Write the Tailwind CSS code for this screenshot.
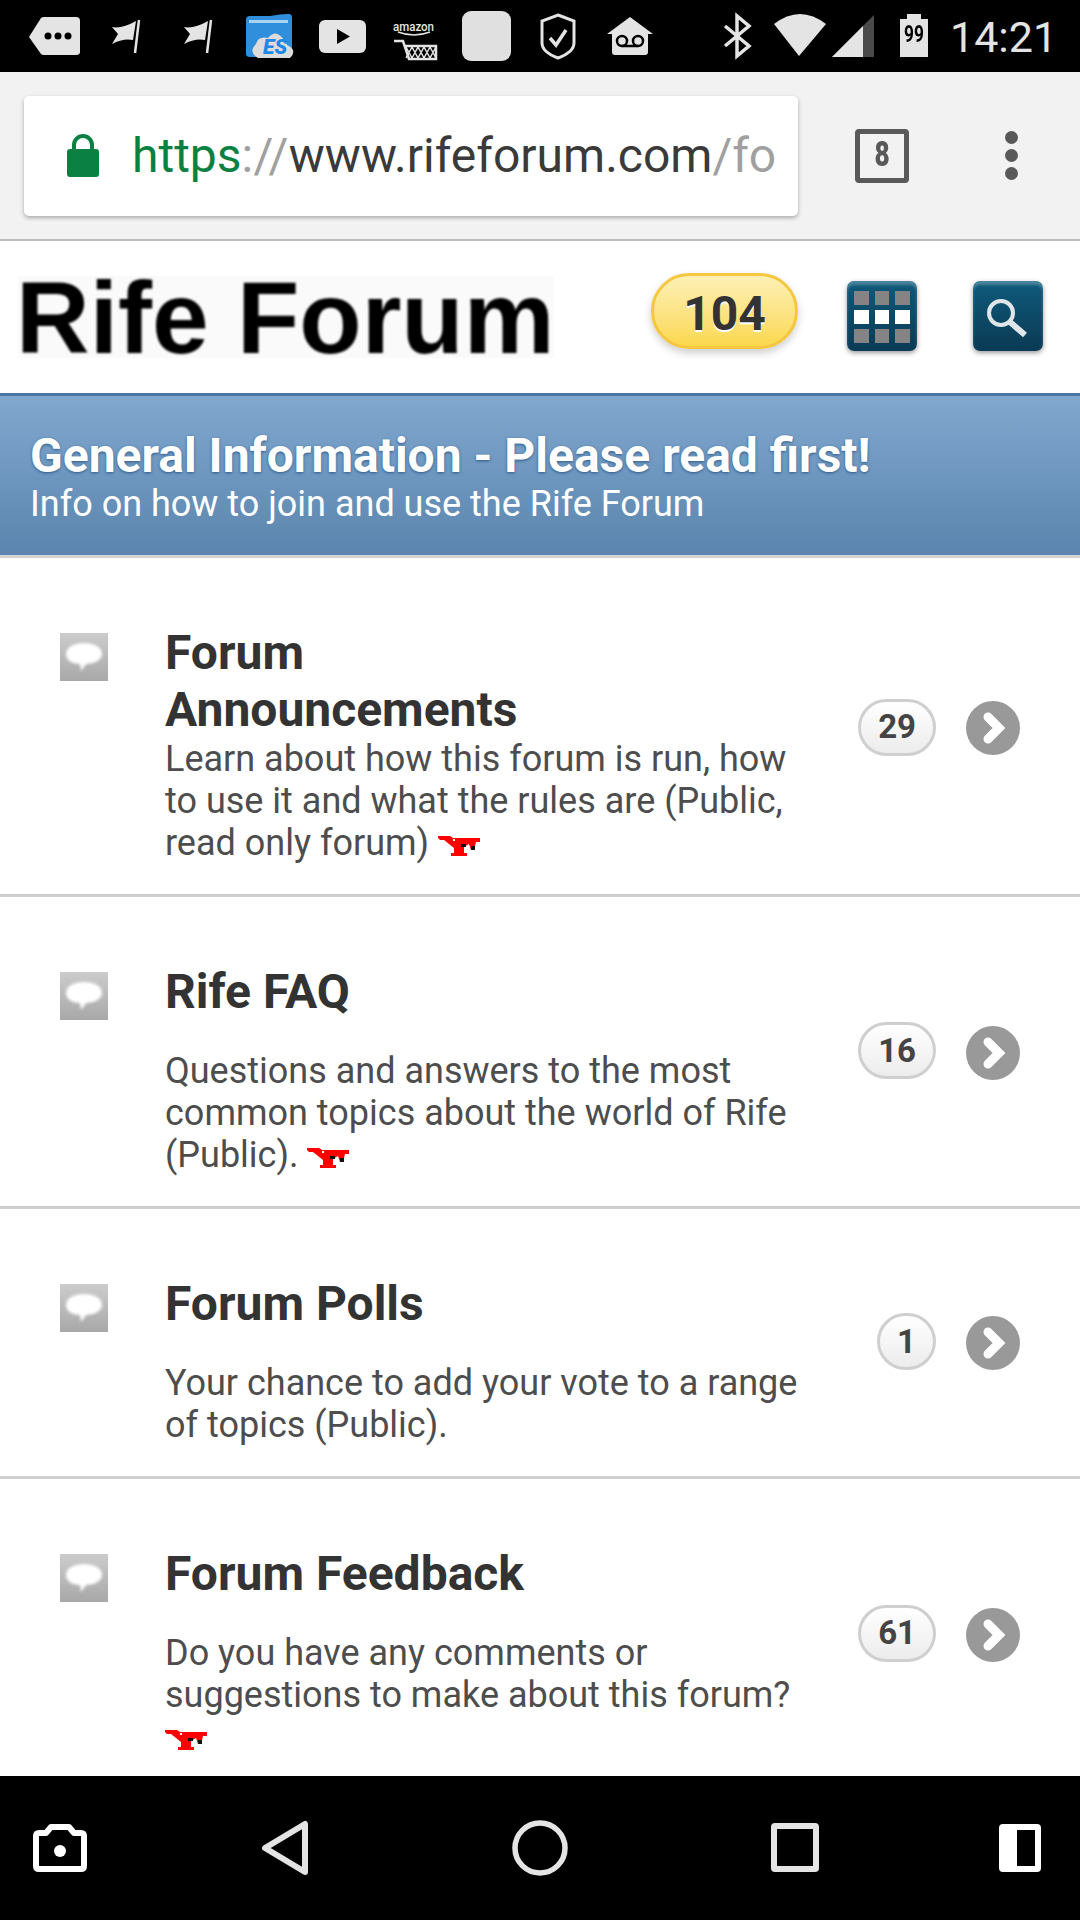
<!DOCTYPE html>
<html lang="en">
<head>
    <meta charset="UTF-8">
    <meta name="viewport" content="width=device-width, initial-scale=1.0">
    <title>Rife Forum</title>
    <script src="https://cdn.jsdelivr.net/npm/@tailwindcss/browser@4"></script>
</head>
<body class="font-['Roboto',sans-serif] bg-white">
<div class="w-[1080px] h-[1920px] flex flex-col overflow-hidden">

    <!-- status bar -->
    <div class="h-[72px] shrink-0 bg-black relative text-[#e4e4e4]">
        <svg class="absolute inset-0" width="1080" height="72" viewBox="0 0 1080 72">
            <!-- notification tag -->
            <path d="M29 37 L41 18 Q42 17 44 17 H76 Q80 17 80 21 V52 Q80 55 76 55 H44 Q42 55 41 54 Z" fill="#e4e4e4"/>
            <circle cx="48" cy="36" r="3.5" fill="#000"/><circle cx="58" cy="36" r="3.5" fill="#000"/><circle cx="68" cy="36" r="3.5" fill="#000"/>
            <!-- flags -->
            <path d="M112 27 Q122 29 136 21 L133 40 Q123 38 112 44 L118 34 Z" fill="#e4e4e4"/><path d="M139 20 L135 53" stroke="#e4e4e4" stroke-width="2.5"/>
            <path d="M184 27 Q194 29 208 21 L205 40 Q195 38 184 44 L190 34 Z" fill="#e4e4e4"/><path d="M211 20 L207 53" stroke="#e4e4e4" stroke-width="2.5"/>
            <!-- ES folder -->
            <path d="M246 20 Q246 16 250 16 H270 Q280 14 288 14 H289 Q292 14 292 18 V54 Q292 57 289 57 H250 Q246 57 246 54 Z" fill="#2f8fdc"/>
            <path d="M249 20 H288 V23 H249 Z" fill="#a9d3f2"/>
            <path d="M258 58 Q248 52 256 44 Q258 36 268 38 Q276 28 284 40 Q287 42 287 45 Q298 50 290 58 Z" fill="#dcdcdc"/>
            <text x="263" y="54" font-family="Roboto" font-size="21" font-weight="900" font-style="italic" fill="#1e88e5">ES</text>
            <!-- youtube -->
            <rect x="319" y="20" width="47" height="33" rx="6" fill="#e4e4e4"/><path d="M337 29 L350 36.500 L337 44 Z" fill="#000"/>
            <!-- amazon cart -->
            <text x="393" y="31" font-family="Roboto" font-size="13" font-weight="500" fill="#e4e4e4" textLength="41" lengthAdjust="spacingAndGlyphs">amazon</text>
            <path d="M398 32 Q414 38 430 32" fill="none" stroke="#e4e4e4" stroke-width="1.500"/>
            <path d="M394 41 H403 L409 59 H436 V46 H405" fill="none" stroke="#e4e4e4" stroke-width="2.500"/>
            <path d="M406 47 L412 58 M412 47 L418 58 M418 47 L424 58 M424 47 L430 58 M430 47 L436 58 M412 47 L406 58 M418 47 L412 58 M424 47 L418 58 M430 47 L424 58 M436 47 L430 58" stroke="#e4e4e4" stroke-width="1.500"/>
            <!-- blank app -->
            <rect x="462" y="11" width="49" height="50" rx="9" fill="#e0e0e0"/>
            <!-- shield -->
            <path d="M558 15 L574 21 V43 Q574 52 558 58 Q542 52 542 43 V21 Z" fill="none" stroke="#e4e4e4" stroke-width="3"/>
            <path d="M550 38 L556 45 L566 30" fill="none" stroke="#e4e4e4" stroke-width="3.500"/>
            <!-- voicemail house -->
            <path d="M630 17 L653 34 H648 V52 Q648 55 645 55 H615 Q612 55 612 52 V34 H607 Z" fill="#e4e4e4"/>
            <circle cx="622" cy="41" r="5" fill="none" stroke="#000" stroke-width="2.500"/><circle cx="638" cy="41" r="5" fill="none" stroke="#000" stroke-width="2.500"/><path d="M622 46 H638" stroke="#000" stroke-width="2.500"/>
            <!-- bluetooth -->
            <path d="M725 26 L749 46 L737 56 V16 L749 26 L725 46" fill="none" stroke="#e4e4e4" stroke-width="3.500"/>
            <!-- wifi -->
            <path d="M774 24 Q800 4 826 24 L799 56 Z" fill="#e4e4e4"/>
            <!-- signal -->
            <path d="M832 57 L874 15 V57 Z" fill="#4a4a4a"/><path d="M832 57 L863 26 V57 Z" fill="#e4e4e4"/>
            <!-- battery -->
            <path d="M900 19 H907 V14 H921 V19 H928 V57 H900 Z" fill="#e4e4e4"/>
        </svg>
        <span class="absolute left-[900px] w-[28px] top-[22px] text-center text-[23px] leading-[26px] font-bold text-black scale-x-75">99</span>
        <span class="absolute left-[950px] top-[15px] text-[43px] leading-[44px] font-normal">14:21</span>
    </div>

    <!-- browser toolbar -->
    <div class="h-[169px] shrink-0 bg-[#f2f2f2] border-b-2 border-[#bdbdbd] flex items-center pl-[24px]">
        <div class="w-[774px] h-[120px] bg-white rounded-[5px] shadow-[0_2px_4px_rgba(0,0,0,0.3)] flex items-center overflow-hidden">
            <svg class="ml-[43px] mr-[33px] shrink-0" width="32" height="44" viewBox="0 0 32 44">
                <path d="M7 18 V11 A9 9 0 0 1 25 11 V18" fill="none" stroke="#0b8043" stroke-width="4"/>
                <rect x="0" y="15" width="32" height="28" rx="3" fill="#0b8043"/>
            </svg>
            <div class="text-[48px] leading-none whitespace-nowrap text-[#3a3a3a]"><span class="text-[#0b8043]">https</span><span class="text-[#a0a0a0] tracking-[0.4px]">://</span>www.rifeforum.com<span class="text-[#a0a0a0]">/fo</span></div>
        </div>
        <div class="ml-[57px] w-[54px] h-[54px] border-[5px] border-[#595959] rounded-[4px] flex items-center justify-center text-[35px] font-black text-[#595959]"><span class="scale-x-75">8</span></div>
        <div class="ml-[96px] flex flex-col gap-[5px]">
            <div class="w-[13px] h-[13px] rounded-full bg-[#595959]"></div>
            <div class="w-[13px] h-[13px] rounded-full bg-[#595959]"></div>
            <div class="w-[13px] h-[13px] rounded-full bg-[#595959]"></div>
        </div>
    </div>

    <!-- forum header -->
    <div class="h-[152px] shrink-0 bg-white flex items-center pl-[18px]">
        <div class="w-[536px] h-[82px] bg-[#fafafa] flex items-center">
            <span class="-ml-[2px] mt-[2px] font-['Liberation_Sans',sans-serif] font-bold text-[102px] leading-[82px] text-black blur-[0.8px] whitespace-nowrap">Rife Forum</span>
        </div>
        <div class="ml-[97px] mb-[12px] pt-[6px] w-[147px] h-[76px] rounded-full border-[3px] border-[#f5c63f] bg-gradient-to-b from-[#fdf0b4] to-[#fbd84c] shadow-[0_4px_8px_rgba(0,0,0,0.2)] flex items-center justify-center text-[48px] font-bold text-[#333] [text-shadow:0_2px_0_#fff]">104</div>
        <div class="ml-[49px] mb-[2px] w-[70px] h-[70px] rounded-[7px] bg-gradient-to-b from-[#0f5a7b] to-[#0a3a54] shadow-[0_2px_5px_rgba(0,0,0,0.4),inset_0_4px_3px_rgba(255,255,255,0.25)] grid grid-cols-3 gap-x-[6px] gap-y-[5px] px-[7px] pt-[10px] pb-[8px]">
            <div class="bg-[#848484] blur-[0.5px]"></div><div class="bg-[#848484] blur-[0.5px]"></div><div class="bg-[#848484] blur-[0.5px]"></div>
            <div class="bg-white blur-[0.5px]"></div><div class="bg-white blur-[0.5px]"></div><div class="bg-white blur-[0.5px]"></div>
            <div class="bg-[#848484] blur-[0.5px]"></div><div class="bg-[#848484] blur-[0.5px]"></div><div class="bg-[#848484] blur-[0.5px]"></div>
        </div>
        <div class="ml-[56px] mb-[2px] w-[70px] h-[70px] rounded-[7px] bg-gradient-to-b from-[#0f5a7b] to-[#0a3a54] shadow-[0_2px_5px_rgba(0,0,0,0.4),inset_0_4px_3px_rgba(255,255,255,0.25)]">
            <svg class="blur-[0.5px]" width="70" height="70" viewBox="0 0 70 70">
                <circle cx="28" cy="32" r="12" fill="none" stroke="#dfe6ea" stroke-width="4"/>
                <path d="M37 41 L52 54" stroke="#dfe6ea" stroke-width="6"/>
            </svg>
        </div>
    </div>

    <!-- category banner -->
    <div class="h-[165px] shrink-0 border-t-[3px] border-b-[3px] border-t-[#4a76a4] border-b-[#d2d2d2] bg-gradient-to-b from-[#81a8cf] to-[#5b85ae] pl-[30px] pt-[33px] text-white">
        <div class="text-[48px] leading-[54px] font-bold [text-shadow:0_1px_3px_#2a5a8a]">General Information - Please read first!</div>
        <div class="text-[36px] leading-[42px]">Info on how to join and use the Rife Forum</div>
    </div>

    <!-- forum rows -->
    <div class="flex-1 overflow-hidden bg-white">
        <div class="h-[339px] flex items-center border-b-[3px] border-[#cfcfcf] pl-[60px]">
            <div class="self-start mt-[75px] w-[48px] h-[48px] shrink-0 bg-gradient-to-b from-[#cccccc] to-[#a8a8a8] flex items-center justify-center">
                <svg width="40" height="34" viewBox="0 0 40 34"><path d="M20 3 C32 3 38 8 38 14 C38 20 30 24 22 24 L17 31 L16 24 C8 24 2 20 2 14 C2 8 8 3 20 3 Z" fill="#fff" class="blur-[1.5px]"/></svg>
            </div>
            <div class="self-start mt-[66px] ml-[57px] w-[640px] shrink-0">
                <div class="text-[48px] leading-[57px] font-bold text-[#333] w-[400px]">Forum Announcements</div>
                <div class="text-[36px] leading-[42px] text-[#4d4d4d]">Learn about how this forum is run, how to use it and what the rules are (Public, read only forum) <svg class="inline-block align-[-2px]" width="42" height="22" viewBox="0 0 42 22"><path d="M0 1 H12 L15 3 H21 V3 H42 V7 H38 L36 15 H33 L31 9 L26 12 V18 H29 V21 H13 V18 H16 V13 L6 5 H2 L0 3 Z" fill="#f00"/><path d="M23 9 H28 V12 H23 Z M33 11 H37 V15 H33 Z" fill="#111"/><path d="M15 4 H17 V6 H15 Z M29 11 H31 V13 H29 Z" fill="#fff"/></svg></div>
            </div>
            <div class="ml-auto mt-[4px] flex items-center gap-[30px] pr-[60px]">
                <div class="mb-[2px] h-[57px] min-w-[56px] px-[17px] rounded-full border-[3px] border-[#cfcfcf] bg-gradient-to-b from-white to-[#ececec] flex items-center justify-center text-[33px] font-bold text-[#444]">29</div>
                <div class="w-[54px] h-[54px] rounded-full bg-[#999] flex items-center justify-center">
                    <svg class="blur-[0.5px]" width="30" height="34" viewBox="0 0 30 34"><path d="M10 6 L21 17 L10 28" fill="none" stroke="#fff" stroke-width="9" stroke-linecap="round"/></svg>
                </div>
            </div>
        </div>

        <div class="h-[312px] flex items-center border-b-[3px] border-[#cfcfcf] pl-[60px]">
            <div class="self-start mt-[75px] w-[48px] h-[48px] shrink-0 bg-gradient-to-b from-[#cccccc] to-[#a8a8a8] flex items-center justify-center">
                <svg width="40" height="34" viewBox="0 0 40 34"><path d="M20 3 C32 3 38 8 38 14 C38 20 30 24 22 24 L17 31 L16 24 C8 24 2 20 2 14 C2 8 8 3 20 3 Z" fill="#fff" class="blur-[1.5px]"/></svg>
            </div>
            <div class="self-start mt-[66px] ml-[57px] w-[640px] shrink-0">
                <div class="text-[48px] leading-[57px] font-bold text-[#333] mb-[30px]">Rife FAQ</div>
                <div class="text-[36px] leading-[42px] text-[#4d4d4d]">Questions and answers to the most common topics about the world of Rife (Public). <svg class="inline-block align-[-2px]" width="42" height="22" viewBox="0 0 42 22"><path d="M0 1 H12 L15 3 H21 V3 H42 V7 H38 L36 15 H33 L31 9 L26 12 V18 H29 V21 H13 V18 H16 V13 L6 5 H2 L0 3 Z" fill="#f00"/><path d="M23 9 H28 V12 H23 Z M33 11 H37 V15 H33 Z" fill="#111"/><path d="M15 4 H17 V6 H15 Z M29 11 H31 V13 H29 Z" fill="#fff"/></svg></div>
            </div>
            <div class="ml-auto mt-[2px] flex items-center gap-[30px] pr-[60px]">
                <div class="mb-[4px] h-[57px] min-w-[56px] px-[17px] rounded-full border-[3px] border-[#cfcfcf] bg-gradient-to-b from-white to-[#ececec] flex items-center justify-center text-[33px] font-bold text-[#444]">16</div>
                <div class="w-[54px] h-[54px] rounded-full bg-[#999] flex items-center justify-center">
                    <svg class="blur-[0.5px]" width="30" height="34" viewBox="0 0 30 34"><path d="M10 6 L21 17 L10 28" fill="none" stroke="#fff" stroke-width="9" stroke-linecap="round"/></svg>
                </div>
            </div>
        </div>

        <div class="h-[270px] flex items-center border-b-[3px] border-[#cfcfcf] pl-[60px]">
            <div class="self-start mt-[75px] w-[48px] h-[48px] shrink-0 bg-gradient-to-b from-[#cccccc] to-[#a8a8a8] flex items-center justify-center">
                <svg width="40" height="34" viewBox="0 0 40 34"><path d="M20 3 C32 3 38 8 38 14 C38 20 30 24 22 24 L17 31 L16 24 C8 24 2 20 2 14 C2 8 8 3 20 3 Z" fill="#fff" class="blur-[1.5px]"/></svg>
            </div>
            <div class="self-start mt-[66px] ml-[57px] w-[650px] shrink-0">
                <div class="text-[48px] leading-[57px] font-bold text-[#333] mb-[30px]">Forum Polls</div>
                <div class="text-[36px] leading-[42px] text-[#4d4d4d]">Your chance to add your vote to a range of topics (Public).</div>
            </div>
            <div class="ml-auto flex items-center gap-[30px] pr-[60px]">
                <div class="mb-[2px] h-[57px] min-w-[56px] px-[17px] rounded-full border-[3px] border-[#cfcfcf] bg-gradient-to-b from-white to-[#ececec] flex items-center justify-center text-[33px] font-bold text-[#444]">1</div>
                <div class="w-[54px] h-[54px] rounded-full bg-[#999] flex items-center justify-center">
                    <svg class="blur-[0.5px]" width="30" height="34" viewBox="0 0 30 34"><path d="M10 6 L21 17 L10 28" fill="none" stroke="#fff" stroke-width="9" stroke-linecap="round"/></svg>
                </div>
            </div>
        </div>

        <div class="h-[308px] flex items-center pl-[60px]">
            <div class="self-start mt-[75px] w-[48px] h-[48px] shrink-0 bg-gradient-to-b from-[#cccccc] to-[#a8a8a8] flex items-center justify-center">
                <svg width="40" height="34" viewBox="0 0 40 34"><path d="M20 3 C32 3 38 8 38 14 C38 20 30 24 22 24 L17 31 L16 24 C8 24 2 20 2 14 C2 8 8 3 20 3 Z" fill="#fff" class="blur-[1.5px]"/></svg>
            </div>
            <div class="self-start mt-[66px] ml-[57px] w-[650px] shrink-0">
                <div class="text-[48px] leading-[57px] font-bold text-[#333] mb-[30px]">Forum Feedback</div>
                <div class="text-[36px] leading-[42px] text-[#4d4d4d]">Do you have any comments or suggestions to make about this forum? <svg class="inline-block align-[-2px]" width="42" height="22" viewBox="0 0 42 22"><path d="M0 1 H12 L15 3 H21 V3 H42 V7 H38 L36 15 H33 L31 9 L26 12 V18 H29 V21 H13 V18 H16 V13 L6 5 H2 L0 3 Z" fill="#f00"/><path d="M23 9 H28 V12 H23 Z M33 11 H37 V15 H33 Z" fill="#111"/><path d="M15 4 H17 V6 H15 Z M29 11 H31 V13 H29 Z" fill="#fff"/></svg></div>
            </div>
            <div class="ml-auto mt-[4px] flex items-center gap-[30px] pr-[60px]">
                <div class="mb-[4px] h-[57px] min-w-[56px] px-[17px] rounded-full border-[3px] border-[#cfcfcf] bg-gradient-to-b from-white to-[#ececec] flex items-center justify-center text-[33px] font-bold text-[#444]">61</div>
                <div class="w-[54px] h-[54px] rounded-full bg-[#999] flex items-center justify-center">
                    <svg class="blur-[0.5px]" width="30" height="34" viewBox="0 0 30 34"><path d="M10 6 L21 17 L10 28" fill="none" stroke="#fff" stroke-width="9" stroke-linecap="round"/></svg>
                </div>
            </div>
        </div>
    </div>

    <!-- nav bar -->
    <div class="h-[144px] shrink-0 bg-black">
        <svg width="1080" height="144" viewBox="0 0 1080 144">
            <path d="M39 57 H46 L51 51 H69 L74 57 H81 Q84 57 84 60 V90 Q84 93 81 93 H39 Q36 93 36 90 V60 Q36 57 39 57 Z" fill="none" stroke="#fff" stroke-width="6" stroke-linejoin="round"/>
            <circle cx="60" cy="75" r="6" fill="#fff"/>
            <path d="M305 48 V96 L265 72 Z" fill="none" stroke="#e4e4e4" stroke-width="6" stroke-linejoin="round"/>
            <circle cx="540" cy="72" r="25" fill="none" stroke="#e4e4e4" stroke-width="5.500"/>
            <rect x="774" y="50" width="42" height="43" fill="none" stroke="#e4e4e4" stroke-width="6" rx="1"/>
            <path d="M1003 48 H1037 Q1041 48 1041 52 V92 Q1041 96 1037 96 H1003 Q999 96 999 92 V52 Q999 48 1003 48 Z" fill="#fff"/>
            <rect x="1017" y="54" width="18" height="36" fill="#000"/>
        </svg>
    </div>
</div>
</body>
</html>
